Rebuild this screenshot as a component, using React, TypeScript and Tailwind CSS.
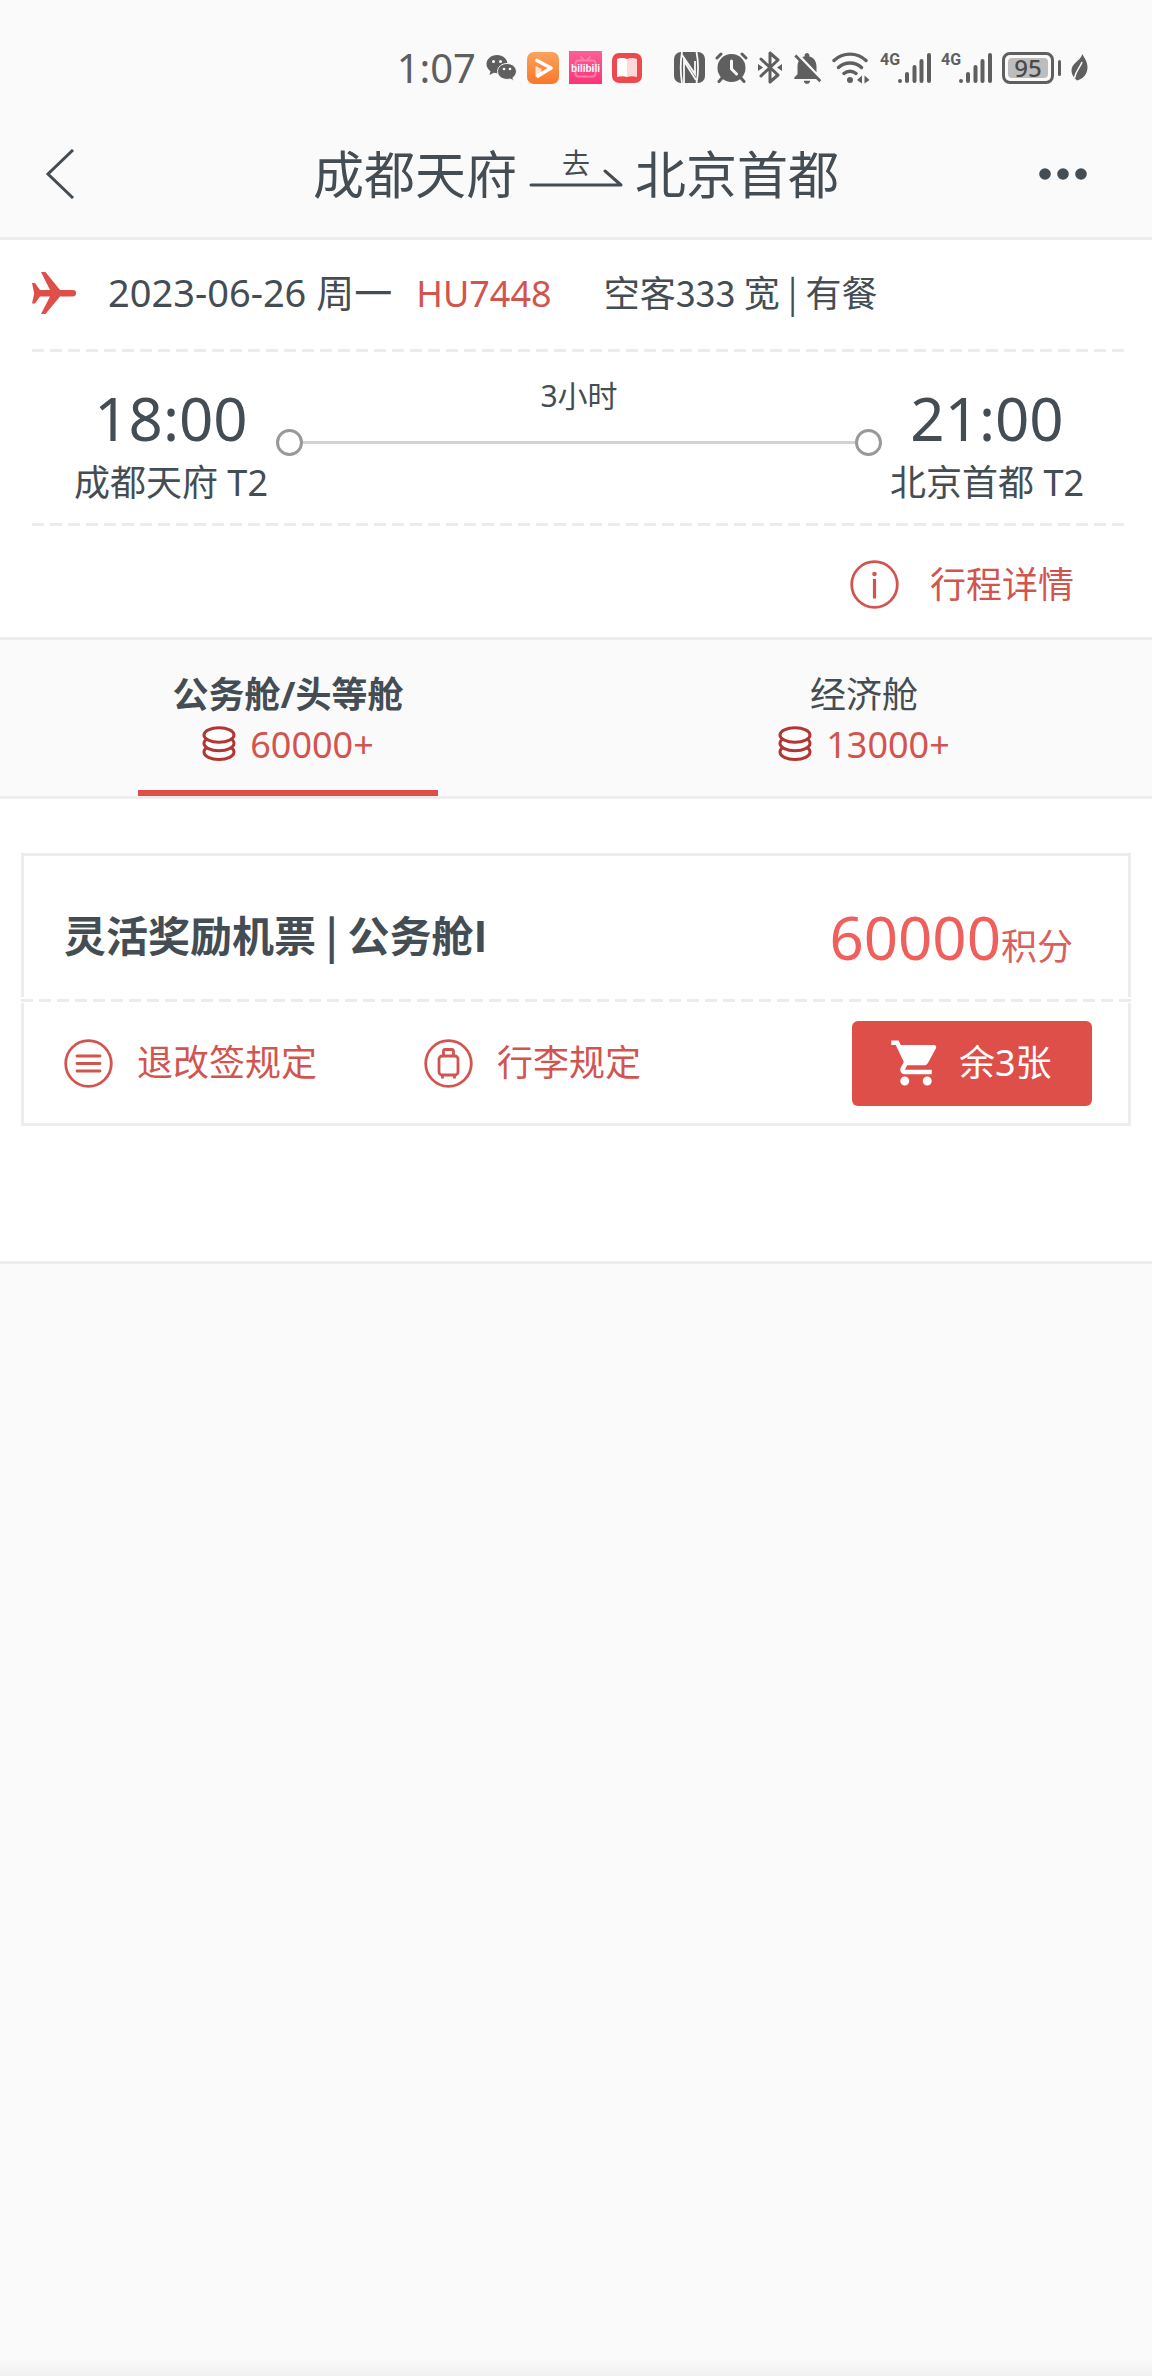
import { useState } from 'react';
import type { ReactNode } from 'react';
import { MdNotificationsOff, MdShoppingCart } from 'react-icons/md';

interface Cabin {
    id: string;
    name: string;
    points: string;
}

const cabins: Cabin[] = [
    { id: 'business', name: '公务舱/头等舱', points: '60000+' },
    { id: 'economy', name: '经济舱', points: '13000+' },
];

function WechatIcon() {
    return (
        <svg width="31" height="28" viewBox="0 0 31 28" fill="#5f5f5f">
            <path d="M11 1C5 1 .5 5 .5 10c0 3 1.600 5.500 4 7.200L3.500 21l4.300-2.200c1 .300 2 .400 3.200.400C17 19.200 21.500 15 21.500 10S17 1 11 1z" />
            <circle cx="7.500" cy="7.500" r="1.500" fill="#fafafa" />
            <circle cx="14.500" cy="7.500" r="1.500" fill="#fafafa" />
            <path
                d="M21 9.500c5.300 0 9.400 3.500 9.400 8 0 2.500-1.400 4.800-3.500 6.200l.8 3-3.600-1.700c-1 .300-2 .400-3.100.400-5.300 0-9.400-3.400-9.400-7.900s4.100-8 9.400-8z"
                stroke="#fafafa"
            />
            <circle cx="18" cy="15" r="1.300" fill="#fafafa" />
            <circle cx="24" cy="15" r="1.300" fill="#fafafa" />
        </svg>
    );
}

function VideoAppIcon() {
    return (
        <svg width="32" height="32" viewBox="0 0 32 32">
            <defs>
                <linearGradient id="video-bg" x1="0" y1="0" x2="0" y2="1">
                    <stop offset="0" stopColor="#fba35c" />
                    <stop offset="1" stopColor="#f9772a" />
                </linearGradient>
            </defs>
            <rect width="32" height="32" rx="7" fill="url(#video-bg)" />
            <path d="M10 8.500l14 7.500-13 8" fill="none" stroke="#fff" strokeWidth="3.600" strokeLinecap="round" strokeLinejoin="round" />
            <path d="M8.500 14v11l6-3.500V17z" fill="#fff" fillOpacity=".75" />
        </svg>
    );
}

function BilibiliIcon() {
    return (
        <svg width="33" height="33" viewBox="0 0 33 33">
            <defs>
                <linearGradient id="bili-bg" x1="0" y1="0" x2="0" y2="1">
                    <stop offset="0" stopColor="#fb5f97" />
                    <stop offset="1" stopColor="#fb3478" />
                </linearGradient>
            </defs>
            <rect width="33" height="33" fill="url(#bili-bg)" />
            <g fill="none" stroke="#fd7fa9" strokeWidth="1.800" strokeLinecap="round">
                <rect x="6.500" y="9.500" width="20" height="16" rx="3" />
                <path d="M12 6l3 3M21 6l-3 3" />
            </g>
            <text x="16.500" y="21" textAnchor="middle" fill="#fff" fontSize="10" fontWeight="700" fontFamily="'Liberation Sans', sans-serif">
                bilibili
            </text>
        </svg>
    );
}

function ReaderIcon() {
    return (
        <svg width="30" height="30" viewBox="0 0 30 30">
            <rect width="30" height="30" rx="7" fill="#ee4a4e" />
            <path d="M5 6c3.500-1.500 7-1.500 10 0v18c-3-1-6.500-1-10 0z" fill="#fff" />
            <path d="M25 6c-3.500-1.500-7-1.500-10 0v18c3-1 6.500-1 10 0z" fill="#fdd9d9" />
        </svg>
    );
}

function NfcIcon() {
    return (
        <svg width="31" height="31" viewBox="0 0 31 31">
            <rect width="31" height="31" rx="7" fill="#5f5f5f" />
            <path
                d="M8 0c-1.500 9-1.500 22 0 31M8 3l13 19V9M10 31V9l12 19M22.500 0c2 10 2 21 0 31"
                fill="none"
                stroke="#fafafa"
                strokeWidth="1.800"
            />
        </svg>
    );
}

function AlarmIcon() {
    return (
        <svg width="33" height="31" viewBox="0 0 33 31" fill="none" stroke="#5f5f5f" strokeLinecap="round">
            <circle cx="16.500" cy="16" r="14" fill="#5f5f5f" stroke="none" />
            <path d="M2 6l4-4M31 6l-4-4M7 26l-3 3.500M26 26l3 3.500" strokeWidth="3" />
            <path d="M16.500 9v8l5 5" stroke="#fafafa" strokeWidth="3" />
        </svg>
    );
}

function BluetoothIcon() {
    return (
        <svg width="24" height="33" viewBox="0 0 24 33" fill="none" stroke="#5f5f5f" strokeWidth="3" strokeLinecap="round" strokeLinejoin="round">
            <path d="M3 8l17 16-8 7V2l8 7L3 25" />
            <path d="M0 13l5 3.500L0 20zM24 13l-5 3.500 5 3.500z" fill="#5f5f5f" stroke="none" />
        </svg>
    );
}

function WifiIcon() {
    return (
        <svg width="38" height="32" viewBox="0 0 38 32" fill="none" stroke="#5f5f5f" strokeWidth="3.400" strokeLinecap="round">
            <path d="M2 8.500c9-8.500 23-8.500 32 0M6.500 15.500c6.500-6 16.500-6 23 0M12 21.500c3.500-3 8.500-3 12 0" />
            <circle cx="18" cy="28" r="3" fill="#5f5f5f" stroke="none" />
            <path d="M30 23.500v8L25 28zM32.500 23.500v8l5-3.500z" fill="#5f5f5f" stroke="none" />
        </svg>
    );
}

function SignalIcon() {
    return (
        <div className="flex items-start">
            <span className="w-[18px] font-['Roboto',sans-serif] text-base leading-4 font-bold">4G</span>
            <svg width="33" height="32" viewBox="0 0 33 32" stroke="#5f5f5f" strokeWidth="4" strokeLinecap="round">
                <path d="M2 29v0M9 22v7M16.500 15v14M23.500 9v20M31 3v26" />
            </svg>
        </div>
    );
}

function BatteryIcon() {
    return (
        <div className="flex items-center gap-1">
            <div className="rounded-lg border-3 border-[#5f5f5f] p-[3px]">
                <div className="w-10 rounded-sm bg-[#bdbdbd] text-center text-2xl leading-5 font-medium text-[#4a4a4a]">95</div>
            </div>
            <div className="h-4 w-[3px] rounded-full bg-[#5f5f5f]" />
        </div>
    );
}

function LeafIcon() {
    return (
        <svg width="17" height="27" viewBox="0 0 17 27">
            <path d="M11.500 0C13 4 16.500 7 16.500 13.500S12 25 6 26.500C2 23 .5 20 .5 16.500.5 9 9 7.500 11.500 0z" fill="#5f5f5f" />
            <path d="M11 8C9 14 5 16 3.500 24" fill="none" stroke="#fafafa" strokeWidth="1.500" />
        </svg>
    );
}

function PlaneIcon() {
    return (
        <svg width="44" height="44" viewBox="0 0 44 44" fill="#de4f4a">
            <path d="M0 12h3l5 7h10L9 1h4.500L28 19h13a3 3 0 0 1 0 6.400H28L13.500 43H9l9-17.600H8L3 32.500H0l2.200-10z" />
        </svg>
    );
}

function CoinsIcon() {
    return (
        <svg width="34" height="38" viewBox="0 0 34 38" fill="#fff" stroke="#b23634" strokeWidth="3">
            <ellipse cx="17" cy="26" rx="15" ry="7.500" />
            <ellipse cx="17" cy="17.300" rx="15" ry="7.500" />
            <ellipse cx="17" cy="9" rx="15" ry="7.300" />
        </svg>
    );
}

function RoundIcon({ children }: { children: ReactNode }) {
    return (
        <svg width="49" height="49" viewBox="0 0 49 49" fill="none" stroke="#d2544f" strokeWidth="2.800">
            <circle cx="24.500" cy="24.500" r="22.800" />
            {children}
        </svg>
    );
}

function Dashes() {
    return <div className="h-[3px] bg-[repeating-linear-gradient(90deg,#ececec_0_12px,transparent_12px_18px)]" />;
}

function Stop({ time, place }: { time: string; place: string }) {
    return (
        <div className="flex flex-col items-center pt-7">
            <span className="text-[60px] leading-[76px]">{time}</span>
            <span className="text-4xl leading-[54px]">{place}</span>
        </div>
    );
}

export default function App() {
    const [active, setActive] = useState('business');

    return (
        <div className="flex min-h-screen flex-col bg-[#fafafa] font-['Noto_Sans','Noto_Sans_CJK_SC',sans-serif] text-[#444d54]">
            <div className="flex h-[111px] items-center justify-end gap-8 pt-6 pr-16 text-[#5f5f5f]">
                <div className="flex items-center gap-[10px]">
                    <span className="text-[40px] leading-10">1:07</span>
                    <WechatIcon />
                    <VideoAppIcon />
                    <BilibiliIcon />
                    <ReaderIcon />
                </div>
                <div className="flex items-center gap-[10px]">
                    <NfcIcon />
                    <AlarmIcon />
                    <BluetoothIcon />
                    <MdNotificationsOff size={38} className="-mx-1" />
                    <WifiIcon />
                    <SignalIcon />
                    <SignalIcon />
                    <BatteryIcon />
                    <LeafIcon />
                </div>
            </div>

            <header className="flex h-[129px] items-center justify-between border-b-3 border-[#ededed] px-11">
                <button aria-label="返回" className="w-20 cursor-pointer">
                    <svg width="32" height="50" viewBox="0 0 32 50" fill="none" stroke="#444d54" strokeWidth="3">
                        <path d="M29 1L4 25l25 24" />
                    </svg>
                </button>
                <h1 className="flex items-center gap-3 text-[51px] leading-[72px]">
                    <span>成都天府</span>
                    <span className="flex flex-col items-center pb-3">
                        <span className="text-[28px] leading-7">去</span>
                        <svg className="-mt-2" width="94" height="18" viewBox="0 0 94 18" fill="none" stroke="#444d54" strokeWidth="3" strokeLinecap="round" strokeLinejoin="round">
                            <path d="M2 16h90L76 2" />
                        </svg>
                    </span>
                    <span>北京首都</span>
                </h1>
                <button aria-label="更多" className="flex w-20 cursor-pointer justify-end pr-5">
                    <svg width="50" height="12" viewBox="0 0 50 12" fill="#444d54">
                        <circle cx="7" cy="6" r="5.800" />
                        <circle cx="25" cy="6" r="5.800" />
                        <circle cx="43" cy="6" r="5.800" />
                    </svg>
                </button>
            </header>

            <section className="border-b-3 border-[#ededed] bg-white">
                <div className="mr-7 ml-8">
                    <div className="flex h-[109px] items-center gap-8 pb-1">
                        <PlaneIcon />
                        <div className="flex items-baseline text-4xl leading-[54px]">
                            <span className="text-[38px]">2023-06-26 周一</span>
                            <span className="ml-6 text-[#d2544f]">HU7448</span>
                            <span className="ml-13 font-['Noto_Sans_CJK_SC',sans-serif]">空客333 宽 | 有餐</span>
                        </div>
                    </div>
                    <Dashes />
                    <div className="flex h-[171px] items-start justify-between pr-10 pl-[42px]">
                        <Stop time="18:00" place="成都天府 T2" />
                        <div className="flex flex-1 flex-col items-center px-2 pt-6">
                            <span className="text-[30px] leading-10">3小时</span>
                            <div className="mt-[13px] flex w-full items-center">
                                <span className="size-[27px] rounded-full border-3 border-[#999]" />
                                <span className="h-[3px] flex-1 bg-[#d2d2d2]" />
                                <span className="size-[27px] rounded-full border-3 border-[#999]" />
                            </div>
                        </div>
                        <Stop time="21:00" place="北京首都 T2" />
                    </div>
                    <Dashes />
                </div>
                <div className="flex h-[111px] items-center justify-end pt-[6px] pr-[78px]">
                    <button className="flex cursor-pointer items-center gap-[31px] text-4xl leading-[54px] text-[#d2544f]">
                        <RoundIcon>
                            <circle cx="24.500" cy="14" r="2.300" fill="#d2544f" stroke="none" />
                            <path d="M24.500 19v19.500" strokeWidth="3.200" />
                        </RoundIcon>
                        行程详情
                    </button>
                </div>
            </section>

            <div role="tablist" className="flex border-b-3 border-[#ededed]">
                {cabins.map((cabin) => (
                    <button
                        key={cabin.id}
                        role="tab"
                        aria-selected={active === cabin.id}
                        onClick={() => setActive(cabin.id)}
                        className="flex flex-1 cursor-pointer flex-col items-center pt-[30px] text-4xl leading-[50px]"
                    >
                        <span className={active === cabin.id ? 'font-bold' : ''}>{cabin.name}</span>
                        <span className="flex items-center gap-[14px] text-[#d2544f]">
                            <CoinsIcon />
                            {cabin.points}
                        </span>
                        <span className={active === cabin.id ? 'mt-5 h-[6px] w-[300px] bg-[#de4f4a]' : 'mt-5 h-[6px]'} />
                    </button>
                ))}
            </div>

            <main className="border-b-3 border-[#ededed] bg-white px-[21px] pt-[54px] pb-[135px]">
                <article>
                    <div className="flex h-36 items-start justify-between border-3 border-b-0 border-[#ededed] pt-12 pr-[55px] pl-10">
                        <h2 className="font-['Noto_Sans_CJK_SC',sans-serif] text-[42px] leading-[60px] font-bold">灵活奖励机票 | 公务舱I</h2>
                        <p className="text-[60px] leading-[66px] text-[#ef5f5b]">
                            60000<span className="text-4xl text-[#d9605b]">积分</span>
                        </p>
                    </div>
                    <div className="pt-[2px] pb-px">
                        <Dashes />
                    </div>
                    <div className="flex h-[123px] items-center border-3 border-t-0 border-[#ededed] pr-9 pl-10 text-4xl leading-[54px]">
                        <button className="flex cursor-pointer items-center gap-6 text-[#d2544f]">
                            <RoundIcon>
                                <path d="M13 17h23M13 24.500h23M13 32h23" strokeLinecap="round" />
                            </RoundIcon>
                            退改签规定
                        </button>
                        <button className="ml-[107px] flex cursor-pointer items-center gap-6 text-[#d2544f]">
                            <RoundIcon>
                                <rect x="15" y="17" width="19" height="19" rx="3" />
                                <path d="M19.500 17v-5a1.500 1.500 0 0 1 1.500-1.500h7a1.500 1.500 0 0 1 1.500 1.500v5M18.500 36v3.500M30.500 36v3.500" />
                            </RoundIcon>
                            行李规定
                        </button>
                        <button className="ml-auto flex h-[85px] w-60 cursor-pointer items-center gap-4 rounded-md bg-[#de4f4a] pl-[37px] text-white">
                            <MdShoppingCart size={54} />
                            余3张
                        </button>
                    </div>
                </article>
            </main>

            <div className="mt-auto h-[18px] bg-linear-to-b from-[#fafafa] to-[#f0f0f0]" />
        </div>
    );
}
